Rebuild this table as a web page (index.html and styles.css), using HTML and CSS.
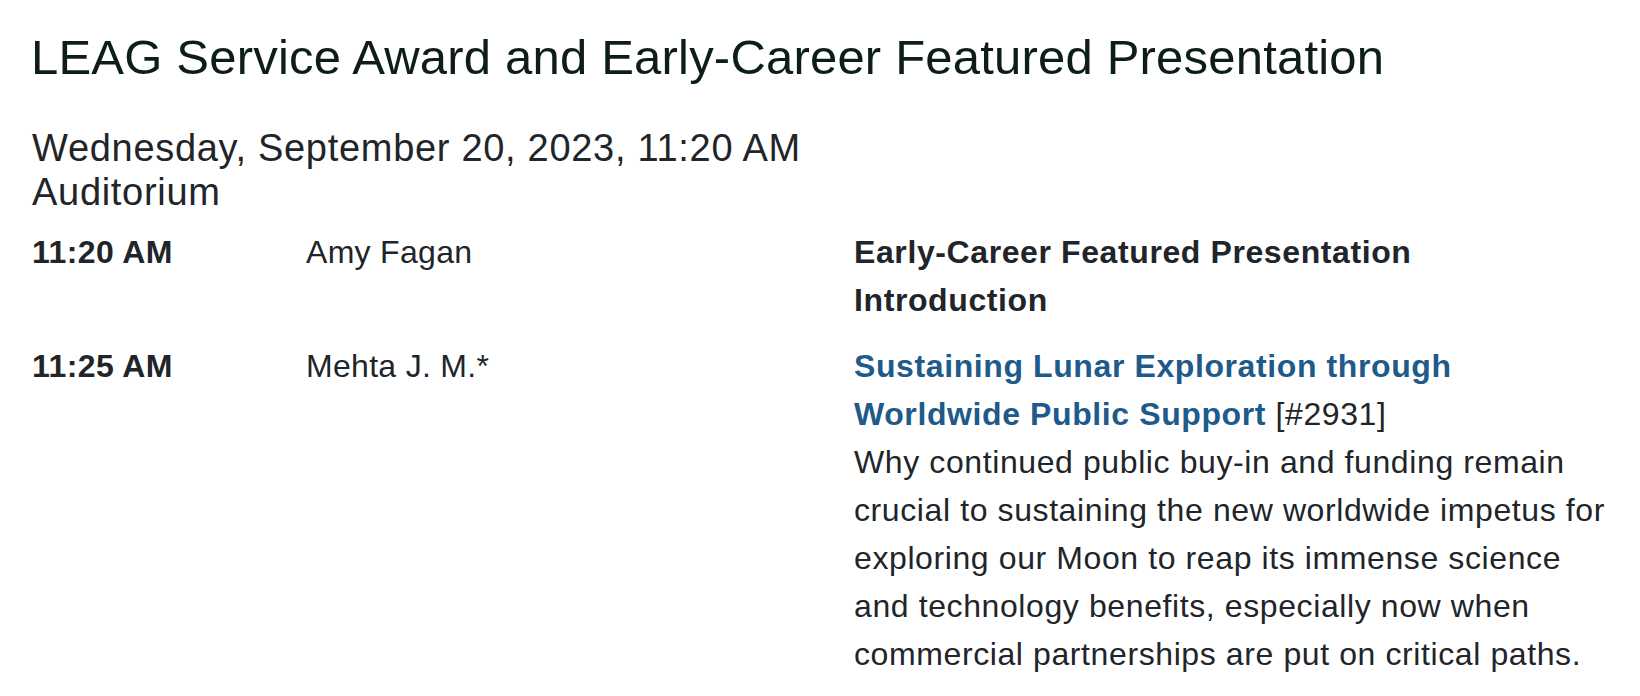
FILE: index.html
```html
<!DOCTYPE html>
<html lang="en">
<head>
<meta charset="utf-8">
<title>LEAG Service Award and Early-Career Featured Presentation</title>
<link rel="stylesheet" href="styles.css">
</head>
<body>
<main class="session">
  <h1 class="session-title">LEAG Service Award and Early-Career Featured Presentation</h1>
  <div class="session-meta">
    <div class="session-when">Wednesday, September 20, 2023, 11:20 AM</div>
    <div class="session-where">Auditorium</div>
  </div>
  <div class="schedule">
    <div class="time">11:20 AM</div>
    <div class="author">Amy Fagan</div>
    <div class="details"><span class="plain-title">Early-Career Featured Presentation Introduction</span></div>

    <div class="time">11:25 AM</div>
    <div class="author">Mehta J. M.*</div>
    <div class="details">
      <a class="paper-link" href="#">Sustaining Lunar Exploration through Worldwide Public Support</a> <span class="paper-id">[#2931]</span><br>
      <span class="abstract">Why continued public buy-in and funding remain crucial to sustaining the new worldwide impetus for exploring our Moon to reap its immense science and technology benefits, especially now when commercial partnerships are put on critical paths.</span>
    </div>
  </div>
</main>
</body>
</html>
```
FILE: styles.css
```css
html, body {
  margin: 0;
  padding: 0;
  background: #ffffff;
}

body {
  font-family: "Liberation Sans", Arial, Helvetica, sans-serif;
  color: #212529;
}

.session {
  padding: 28px 0 0 31px;
}

.session-title {
  margin: 0;
  font-size: 49px;
  line-height: 58px;
  font-weight: 400;
  letter-spacing: 0.2px;
  color: #0c1e16;
}

.session-meta {
  margin-top: 40px;
  padding-left: 1px;
  font-size: 38px;
  line-height: 44px;
  letter-spacing: 0.7px;
  color: #212529;
}

.schedule {
  margin-top: 14px;
  display: grid;
  grid-template-columns: 274px 549px 754px;
  row-gap: 18px;
  font-size: 32px;
  line-height: 48px;
}

.time {
  font-weight: 700;
  padding-left: 1px;
  letter-spacing: 0.4px;
}

.author {
  padding-left: 1px;
  letter-spacing: 0.3px;
}

.details {
  letter-spacing: 0.6px;
}

.plain-title {
  font-weight: 700;
}

.paper-link {
  font-weight: 700;
  color: #1e5a8a;
  text-decoration: none;
}

.paper-id {
  color: #212529;
}
```
